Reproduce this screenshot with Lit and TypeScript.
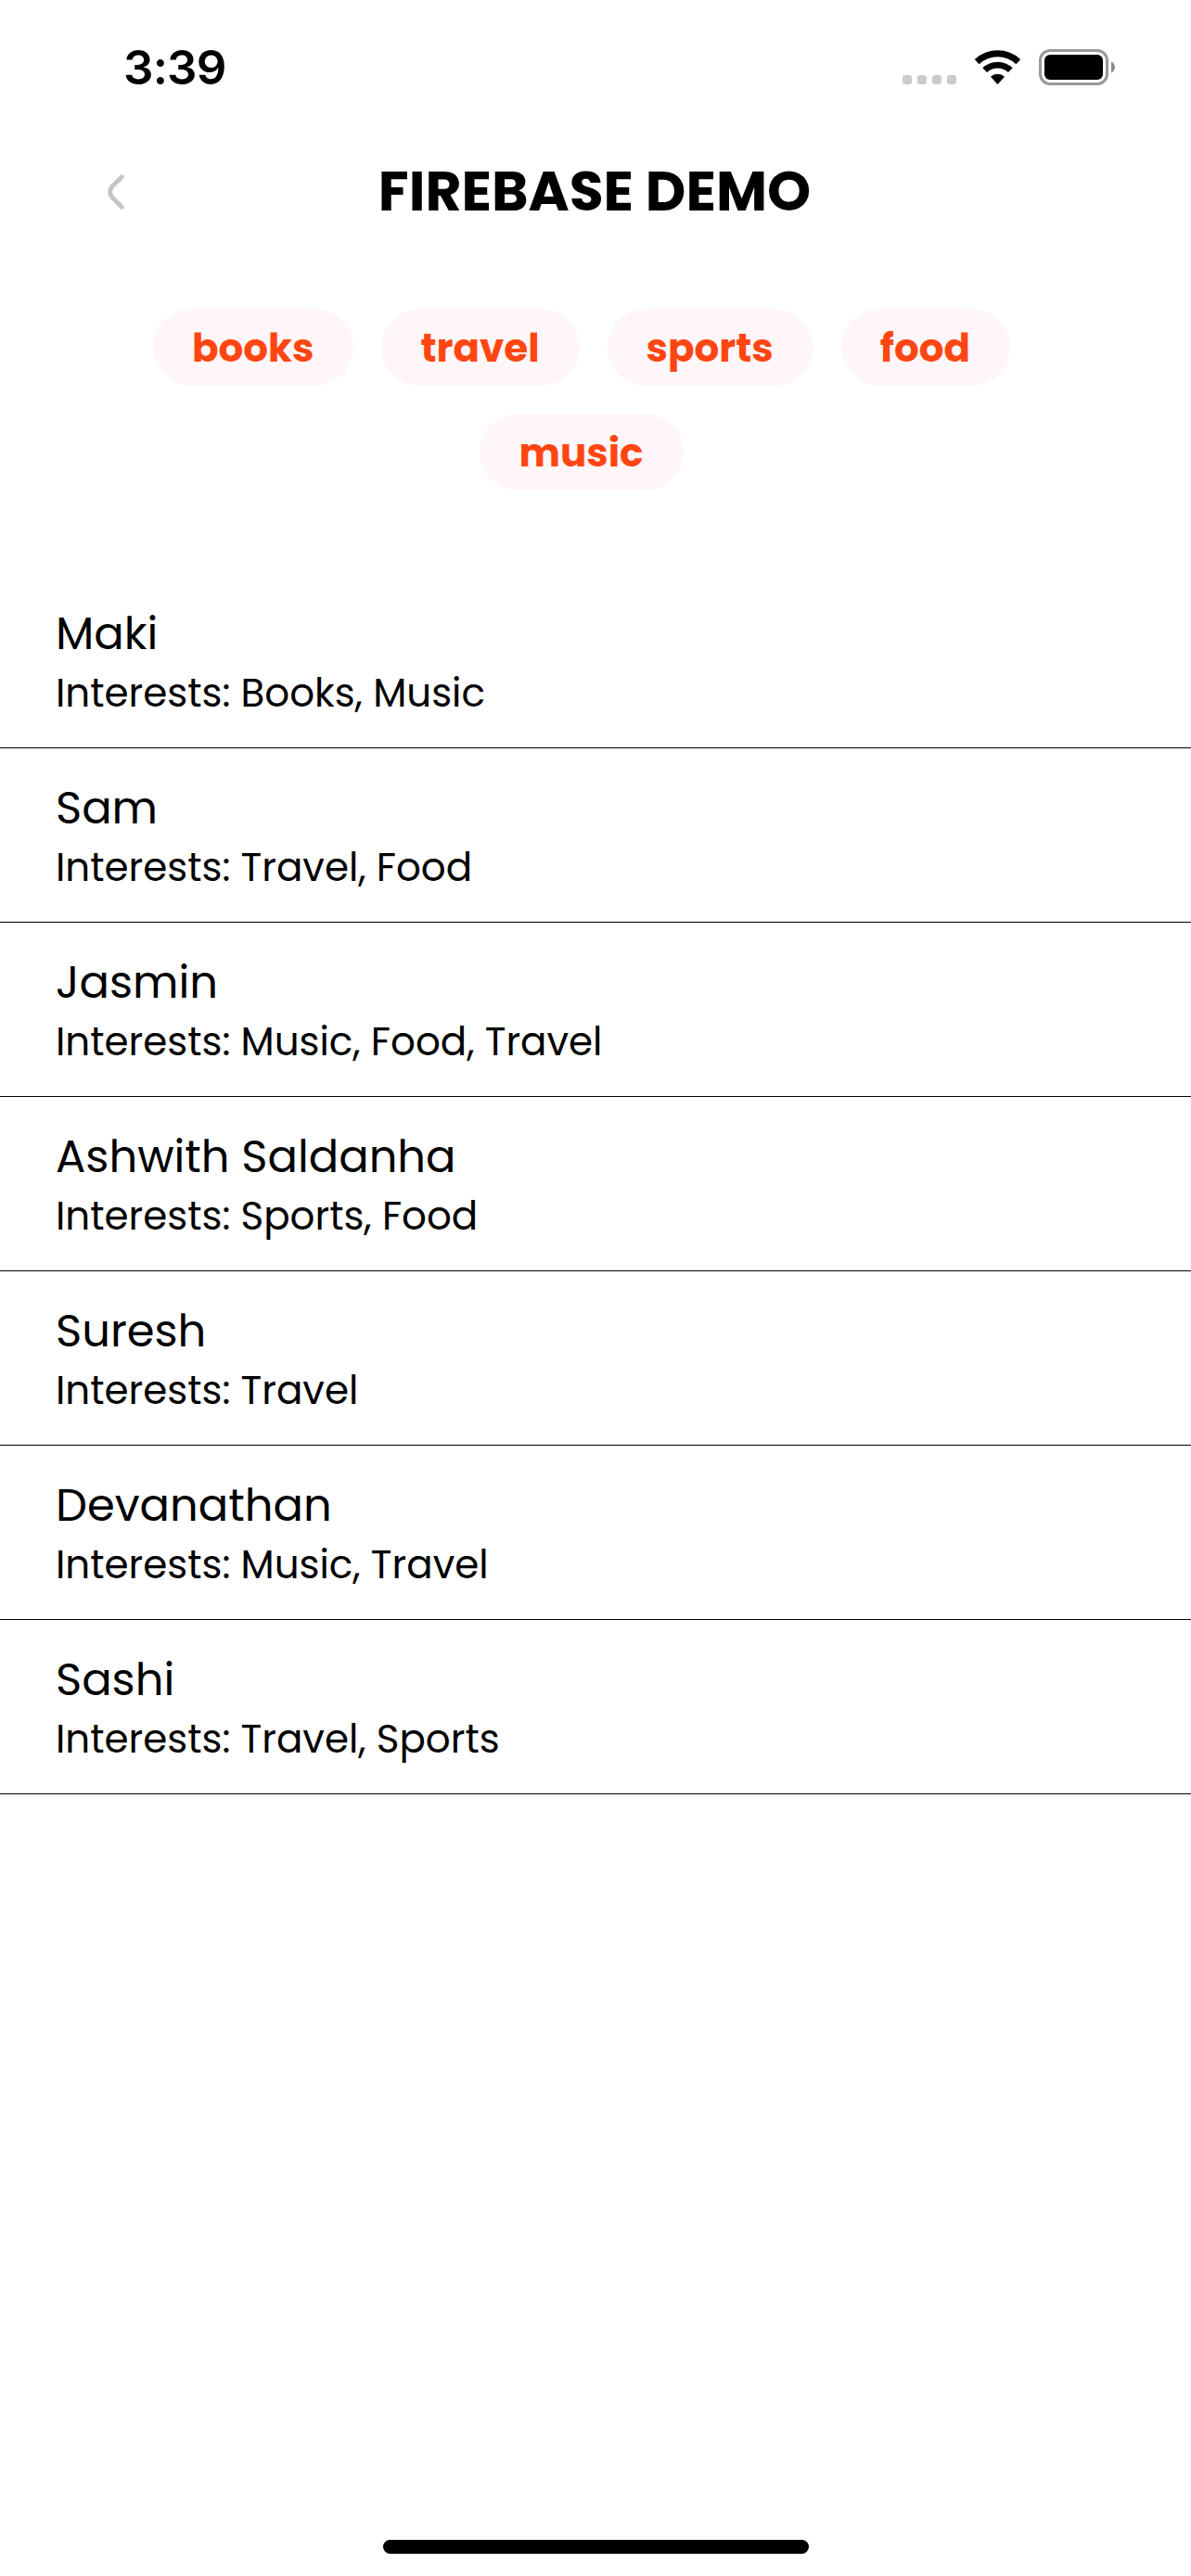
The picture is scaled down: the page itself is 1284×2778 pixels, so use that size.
import { LitElement, html, css } from "lit";
import { customElement } from "lit/decorators.js";

interface Person { name: string; interests: string[] }

const CHIPS = ["books", "travel", "sports", "food", "music"];

const PEOPLE: Person[] = [
  { name: "Maki", interests: ["Books", "Music"] },
  { name: "Sam", interests: ["Travel", "Food"] },
  { name: "Jasmin", interests: ["Music", "Food", "Travel"] },
  { name: "Ashwith Saldanha", interests: ["Sports", "Food"] },
  { name: "Suresh", interests: ["Travel"] },
  { name: "Devanathan", interests: ["Music", "Travel"] },
  { name: "Sashi", interests: ["Travel", "Sports"] },
];

@customElement("status-bar")
class StatusBar extends LitElement {
  static styles = css`
    :host {
      display: flex; justify-content: space-between; height: 146px; padding: 0 82px 0 133px; box-sizing: border-box;
      font-family: Inter, "Liberation Sans", sans-serif;
    }
    .time { font-size: 51px; font-weight: 600; line-height: 62px; padding-top: 42px; letter-spacing: -0.8px; }
    .icons { display: flex; align-items: flex-start; padding-top: 53px; }
    .icons svg { display: block; }
    .signal { margin: 28px 19px 0 0; }
    .wifi { margin-right: 16px; }
  `;
  render() {
    return html`
      <div class="time">3:39</div>
      <div class="icons">
        <svg class="signal" width="58" height="10" fill="#cbcbcb">
          <rect x="0" width="10" height="10" rx="3.2" /><rect x="16" width="10" height="10" rx="3.2" />
          <rect x="32" width="10" height="10" rx="3.2" /><rect x="48" width="10" height="10" rx="3.2" />
        </svg>
        <svg class="wifi" width="54" height="40" viewBox="0 0 54 40">
          <path d="M0.8 11 A36.5 36.5 0 0 1 50.2 11 L45.4 16.2 A29 29 0 0 0 5.6 16.2 Z" />
          <path d="M9.3 20.2 A23.5 23.5 0 0 1 41.7 20.2 L36.9 25 A16.6 16.6 0 0 0 14.1 25 Z" />
          <path d="M18 29.8 A11 11 0 0 1 33 29.8 L25.5 38 Z" />
        </svg>
        <svg class="battery" width="82" height="39" viewBox="0 0 82 39">
          <rect x="1.5" y="1.5" width="72" height="36" rx="10.5" fill="none" stroke="#999" stroke-width="3" />
          <rect x="6" y="6" width="63" height="27" rx="6" />
          <path d="M78 13.5 C83.3 15.5 83.3 23.5 78 25.5 Z" fill="#8c8c8c" />
        </svg>
      </div>`;
  }
}

@customElement("person-row")
class PersonRow extends LitElement {
  static properties = { person: { attribute: false } };
  declare person: Person;
  static styles = css`
    :host { display: block; height: 188px; box-sizing: border-box; padding: 33px 60px 0; border-bottom: 1px solid #000; }
    .name { font-size: 48px; line-height: 64px; }
    .interests { font-size: 42px; line-height: 63px; }
  `;
  render() {
    return html`
      <div class="name">${this.person.name}</div>
      <div class="interests">Interests: ${this.person.interests.join(", ")}</div>`;
  }
}

@customElement("app-root")
class AppRoot extends LitElement {
  static styles = css`
    :host {
      display: flex; flex-direction: column; height: 2778px; overflow: hidden; background: #fff; color: #000;
      font-family: Poppins, Inter, "Liberation Sans", sans-serif; font-feature-settings: "cv11";
    }
    .header { display: grid; grid-template-columns: 116px 1fr 116px; align-items: center; height: 121px; }
    .back { justify-self: end; margin-right: -19px; display: block; }
    .title { margin: 0; padding: 0 2px 2px 0; text-align: center; font-size: 60px; font-weight: 700; line-height: 76px; }
    .chips { display: flex; flex-wrap: wrap; justify-content: center; gap: 30px; padding: 66px 165px 0 135px; margin-bottom: 90px; }
    .chip {
      height: 83px; box-sizing: border-box; padding: 2px 43px 0 42px; border-radius: 42px; background: #fff6f9; color: #ff4612;
      display: flex; align-items: center; font-size: 42px; font-weight: 700; line-height: 63px;
    }
    .home { width: 459px; height: 15px; border-radius: 8px; background: #000; margin: auto auto 24px 413px; }
  `;
  render() {
    return html`
      <status-bar></status-bar>
      <header class="header">
        <svg class="back" width="20" height="40" viewBox="0 0 20 40" fill="none" stroke="#c4c4c4" stroke-width="4.8" stroke-linecap="round">
          <path d="M16.3 3.7 L6 14 Q1.2 20 6 26 L16.3 36.3" />
        </svg>
        <h1 class="title">FIREBASE DEMO</h1>
      </header>
      <div class="chips">${CHIPS.map((label) => html`<div class="chip">${label}</div>`)}</div>
      <main>${PEOPLE.map((p) => html`<person-row .person=${p}></person-row>`)}</main>
      <div class="home"></div>`;
  }
}
